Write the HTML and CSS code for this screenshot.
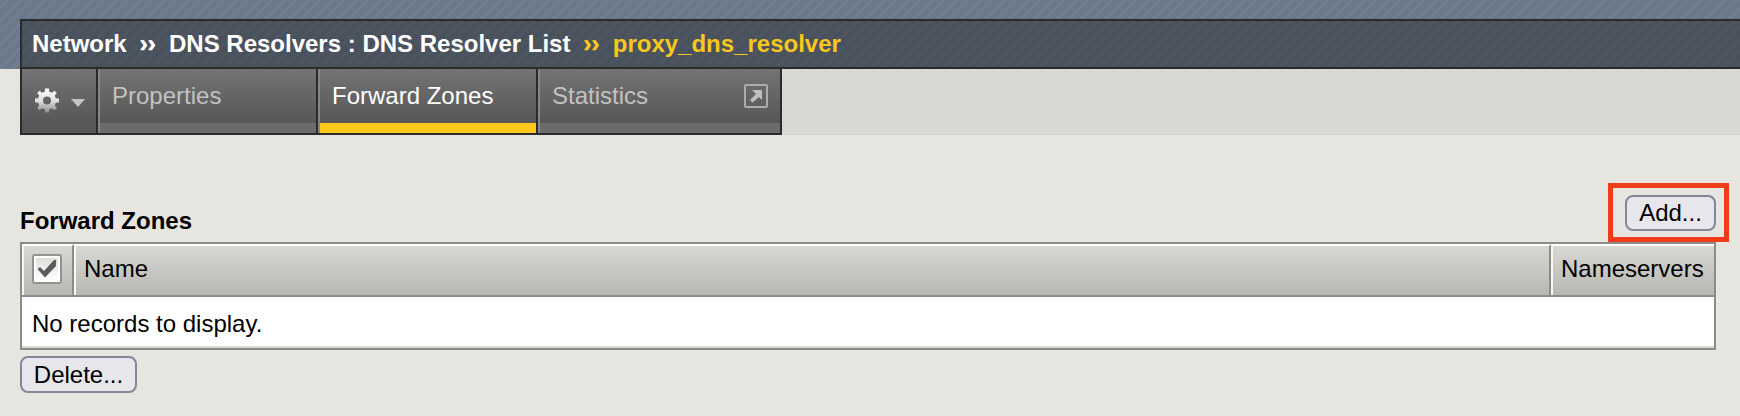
FILE: index.html
```html
<!DOCTYPE html>
<html lang="en">
<head>
<meta charset="utf-8">
<title>DNS Resolvers</title>
<link rel="stylesheet" href="styles.css">
</head>
<body>
<header class="top">
  <h1 class="crumbs"><span>Network</span><span class="sep">››</span><span>DNS Resolvers : DNS Resolver List</span><span class="sep current">››</span><span class="current">proxy_dns_resolver</span></h1>
</header>
<div class="tabrow">
  <nav class="tabs">
    <div class="tab gear">
      <svg width="26" height="28" viewBox="0 0 26 28">
        <defs><linearGradient id="g" x1="0" y1="0" x2="0" y2="1"><stop offset="0" stop-color="#fff"/><stop offset=".5" stop-color="#e0e0e0"/><stop offset="1" stop-color="#8e8e8e"/></linearGradient></defs>
        <g transform="translate(13 13.5)">
          <path fill="url(#g)" fill-rule="evenodd" d="M-2-12H2L2.200-8.800 5-7.800 7.400-9.800 9.800-7.400 7.800-5 8.800-2.200 12-2V2L8.800 2.200 7.800 5 9.800 7.400 7.400 9.800 5 7.800 2.200 8.800 2 12H-2L-2.200 8.800-5 7.800-7.400 9.800-9.800 7.400-7.800 5-8.800 2.200-12 2V-2L-8.800-2.200-7.800-5-9.800-7.400-7.400-9.800-5-7.800-2.200-8.800ZM0-4A4 4 0 1 0 0 4 4 4 0 1 0 0-4Z"/>
        </g>
      </svg>
      <svg class="caret" width="16" height="10" viewBox="0 0 16 10"><path fill="#c4c4c4" d="M1 1H15L8 9Z"/></svg>
    </div>
    <div class="tab">Properties</div>
    <div class="tab active">Forward Zones</div>
    <div class="tab wide">Statistics
      <svg class="pop" width="24" height="24" viewBox="0 0 24 24"><rect x="1" y="1" width="22" height="22" rx="1" fill="none" stroke="#acacac" stroke-width="2"/><path fill="#c0c0c0" d="M8 6H18V16L15 13 8.500 18.500 6 16 12 10Z"/></svg>
    </div>
  </nav>
</div>
<main class="content">
  <div class="heading"><h2>Forward Zones</h2><div class="callout"><button class="btn">Add...</button></div></div>
  <div class="table">
    <div class="row head">
      <div class="cell check"><svg width="30" height="30" viewBox="0 0 30 30"><defs><linearGradient id="b" x1="0" y1="0" x2="0" y2="1"><stop offset="0" stop-color="#deded9"/><stop offset="1" stop-color="#fff"/></linearGradient></defs><rect x="1" y="1" width="28" height="28" rx="2" fill="#fff" stroke="#92928f" stroke-width="2"/><rect x="4" y="4" width="22" height="22" fill="url(#b)"/><path fill="#5c5c5c" d="M5.500 15 8 13 12 17 22 6H24V12L13 23.500Z"/></svg></div>
      <div class="cell name">Name</div>
      <div class="cell ns">Nameservers</div>
    </div>
    <div class="row empty">No records to display.</div>
  </div>
  <button class="btn delete">Delete...</button>
</main>
</body>
</html>
```
FILE: styles.css
```css
* { box-sizing: border-box; }
body { margin: 0; background: #e6e5e0; font: 24px/28px "Liberation Sans", Arial, sans-serif; color: #000; height: 416px; overflow: hidden; }
h1, h2 { margin: 0; font-size: 24px; }
.top { height: 69px; padding: 19px 0 0 20px; background: repeating-linear-gradient(135deg, #6b788a 0, #6b788a 3px, #717e8f 5.500px, #717e8f 7px, #6b788a 8.485px); }
.crumbs { height: 50px; display: flex; align-items: center; padding: 0 0 0 10px; color: #fff; border: 2px solid #2b2b2b; border-right: 0; background: repeating-linear-gradient(135deg, #49515d 0, #49515d 3px, #4d5560 5.500px, #4d5560 7px, #49515d 8.485px); white-space: pre; }
.sep { margin: 0 13.3px 0 13px; -webkit-text-stroke: .6px currentColor; }
.current { color: #fac71b; }
.tabrow { height: 66px; padding-left: 20px; background: linear-gradient(90deg, #e6e5e0 20px, #d9d8d3 20px); }
.tabs { display: flex; width: 762px; height: 66px; border: 2px solid #2b2b2b; border-top: 0; background: linear-gradient(#737373, #575757 85%); color: #c2c2c2; }
.tab { width: 220px; padding: 13px 12px 0 14px; border-right: 2px solid #2b2b2b; box-shadow: inset 2px 0 #858585, inset 0 -10px #6b6b6b; }
.tab.gear { width: 76px; display: flex; align-items: center; padding: 0 0 0 12px; box-shadow: none; }
.caret { margin: 3px 0 0 10px; }
.tab.active { color: #fff; box-shadow: inset 2px 0 #858585, inset 0 -10px #fac71b; }
.tab.wide { width: 242px; border-right: 0; display: flex; justify-content: space-between; }
.pop { margin-top: 2px; }
.content { padding: 48px 24px 0 20px; }
.heading { display: flex; justify-content: space-between; height: 59px; }
.heading h2 { padding-top: 24px; }
.callout { width: 121px; height: 59px; margin-right: -12.5px; padding: 7px 7.5px 0 12.5px; border: 5px solid #f03c18; flex: none; }
.btn { display: block; width: 91px; height: 36px; padding: 0 0 1px; border: 2px solid #86869a; border-radius: 8px; background: #e6e6eb; font: 24px/28px "Liberation Sans", Arial, sans-serif; color: #000; }
.table { height: 108px; border: 2px solid #8b8b8b; background: #fff; }
.row { display: flex; }
.head { height: 53px; border-bottom: 2px solid #8b8b8b; background: linear-gradient(#d9d9d5, #b8b7b2); }
.cell { border-top: 2px solid #fff; border-left: 2px solid #f7f7f5; border-right: 2px solid #8b8b8b; padding: 9px 8px 0; }
.check { width: 52px; padding: 8px 0 0 8px; }
.name { flex: 1; }
.ns { width: 163px; border-right: 0; }
.empty { height: 51px; padding: 13px 10px 0; border-bottom: 2px solid #d9d9d5; }
.delete { width: 117px; height: 37px; margin-top: 6px; padding: 1px 0 0; }
```
